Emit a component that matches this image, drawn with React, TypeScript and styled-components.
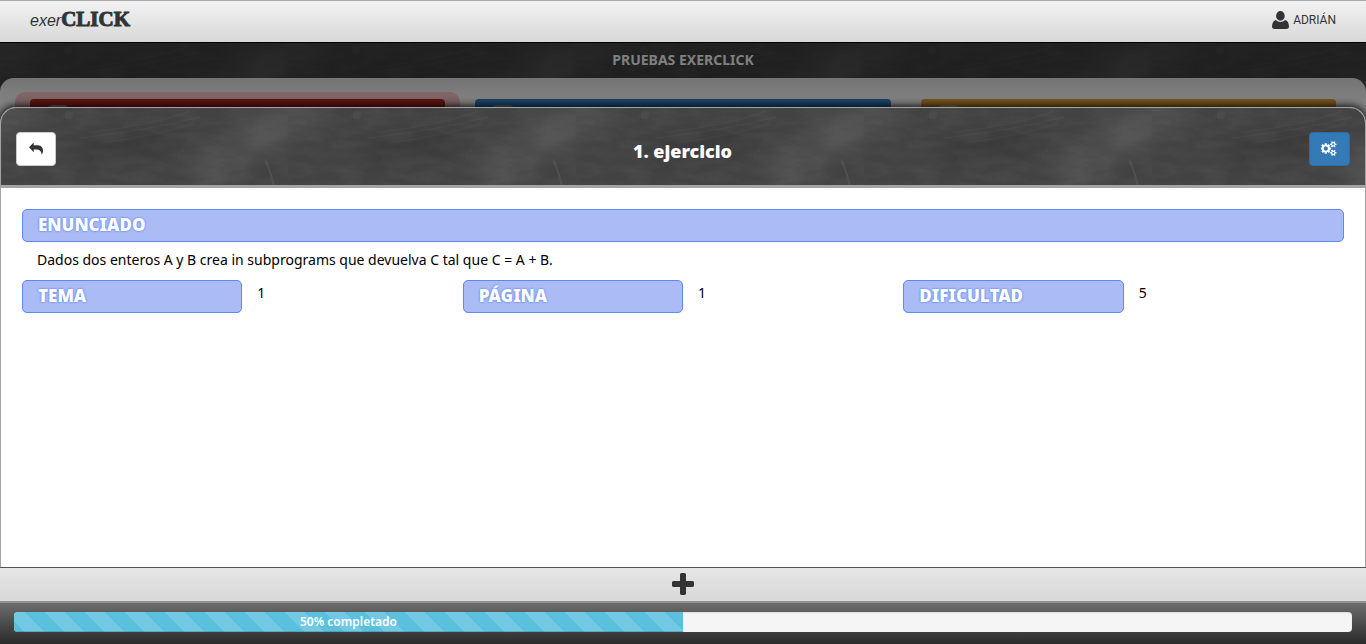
import React from 'react';
import styled, { createGlobalStyle } from 'styled-components';

const GlobalStyle = createGlobalStyle`
  *, *::before, *::after { box-sizing: border-box; }
  body {
    margin: 0;
    background: #202020;
    color: #000;
    font: 14px/20px 'Noto Sans', 'Open Sans', sans-serif;
  }
  button { font: inherit; cursor: pointer; }
`;

const Page = styled.div`
  display: flex;
  flex-direction: column;
  min-height: 100vh;
`;

const TopBar = styled.header`
  display: flex;
  justify-content: space-between;
  align-items: center;
  height: 43px;
  padding: 0 30px 4px;
  border-top: 1px solid #a9a9a9;
  border-bottom: 1px solid #000;
  background: linear-gradient(#f2f2f2, #d8d8d8);
  color: #333;
`;

const Logo = styled.a`
  color: #333;
  text-decoration: none;
  font: bold 21px/24px 'Liberation Serif', serif;
  -webkit-text-stroke: 1px #333;
`;

const LogoScript = styled.span`
  font: italic 16px/24px 'Liberation Sans', sans-serif;
  -webkit-text-stroke: 0;
`;

const UserLink = styled.a`
  display: flex;
  align-items: center;
  gap: 4px;
  color: #333;
  text-decoration: none;
  font: 12px/20px Roboto, 'Liberation Sans', sans-serif;
`;

const Stage = styled.main`
  display: grid;
  flex: 1;
`;

const Board = styled.section`
  grid-area: 1 / 1;
  position: relative;
  display: flex;
  flex-direction: column;
`;

const BoardTitle = styled.h1`
  position: relative;
  margin: 0;
  padding: 7px 0 8px;
  color: #808080;
  font-size: 14px;
  line-height: 20px;
  text-align: center;
`;

const BoardPanel = styled.div`
  position: relative;
  flex: 1;
  display: grid;
  grid-template-columns: repeat(3, 1fr);
  align-items: start;
  padding: 14px 15px 0;
  border-radius: 14px 14px 0 0;
  background: linear-gradient(#747474, #828282 24px);
`;

const Card = styled.div<{ $selected?: boolean }>`
  padding: 7px 15px 0;
  border-radius: 10px;
  background: ${p => (p.$selected ? '#806466' : 'transparent')};
`;

const CardHead = styled.div<{ $color: string }>`
  height: 40px;
  padding: 6px 16px;
  border-radius: 4px 4px 0 0;
  background: ${p => p.$color};
`;

const CardBadge = styled.div<{ $color: string }>`
  width: 24px;
  height: 20px;
  border-radius: 6px;
  background: ${p => p.$color};
`;

const Dialog = styled.section`
  grid-area: 1 / 1;
  z-index: 1;
  display: flex;
  flex-direction: column;
  margin-top: 64px;
  border: 1px solid #a3a3a3;
  border-bottom: 0;
  border-radius: 16px 16px 0 0;
  background: #fff;
  box-shadow: 0 0 8px 1px #000;
`;

const DialogHead = styled.header`
  position: relative;
  display: flex;
  justify-content: space-between;
  align-items: center;
  height: 80px;
  padding: 4px 15px 0;
  border-bottom: 3px solid #a3a3a3;
  border-radius: 15px 15px 0 0;
  background: #424242;
  overflow: hidden;
`;

const DialogTitle = styled.h2`
  position: relative;
  margin: 0;
  padding-top: 4px;
  color: #fff;
  font-size: 18px;
  font-weight: 900;
  line-height: 24px;
`;

const IconButton = styled.button<{ $primary?: boolean }>`
  position: relative;
  display: flex;
  align-items: center;
  justify-content: center;
  width: ${p => (p.$primary ? 41 : 40)}px;
  height: 34px;
  padding: 0;
  border: 1px solid ${p => (p.$primary ? '#2e6da4' : '#ccc')};
  border-radius: 4px;
  background: ${p => (p.$primary ? '#337ab7' : '#fff')};
  color: ${p => (p.$primary ? '#fff' : '#333')};
`;

const DialogBody = styled.div`
  flex: 1;
  padding: 21px;
`;

const Label = styled.h3`
  margin: 0;
  padding: 4px 15px 5px;
  border: 1px solid #5f87f5;
  border-radius: 5px;
  background: #aabbf6;
  color: #fff;
  font-size: 17px;
  font-weight: 900;
  line-height: 22px;
  text-shadow: 0 0 2px #5f87f5, 0 0 2px #5f87f5;
`;

const Statement = styled.p`
  margin: 0;
  padding: 8px 15px 10px;
`;

const Fields = styled.div`
  display: grid;
  grid-template-columns: repeat(6, 1fr);
`;

const Value = styled.p`
  margin: 0;
  padding: 3px 15px;
`;

const AddBar = styled.div`
  position: relative;
  z-index: 2;
  display: flex;
  height: 34px;
  border-top: 1px solid #555;
  background: linear-gradient(#e6e6e6, #d8d8d8);
`;

const AddButton = styled.button`
  flex: 1;
  display: flex;
  justify-content: center;
  align-items: center;
  padding: 0 0 2px;
  border: 0;
  background: none;
  color: #333;
`;

const Footer = styled.footer`
  height: 43px;
  padding: 9px 14px;
  border-top: 2px solid #929292;
  background: linear-gradient(#6c6c6c, #2b2b2b);
`;

const Track = styled.div`
  height: 20px;
  border-radius: 4px;
  background: #f5f5f5;
  box-shadow: inset 0 1px 2px rgba(0, 0, 0, 0.1);
  overflow: hidden;
`;

const Fill = styled.div`
  height: 20px;
  background-color: #5bc0de;
  background-image: linear-gradient(
    45deg,
    rgba(255, 255, 255, 0.15) 25%,
    transparent 25%,
    transparent 50%,
    rgba(255, 255, 255, 0.15) 50%,
    rgba(255, 255, 255, 0.15) 75%,
    transparent 75%,
    transparent
  );
  background-size: 40px 40px;
  background-position: 31px 0;
  box-shadow: inset 0 -1px 0 rgba(0, 0, 0, 0.15);
  color: #fff;
  font-size: 12px;
  font-weight: 600;
  line-height: 20px;
  text-align: center;
`;

const TextureSvg = styled.svg`
  position: absolute;
  inset: 0;
  width: 100%;
  height: 100%;
`;

/* Chalkboard texture, repeated every 288px. */
function Chalkboard({ id, strength }: { id: string; strength: number }) {
  return (
    <TextureSvg aria-hidden="true" opacity={strength}>
      <defs>
        <filter id={`${id}-soft`} x="-50%" y="-50%" width="200%" height="200%">
          <feGaussianBlur stdDeviation="10" />
        </filter>
        <filter id={`${id}-grain`} x="0" y="0" width="100%" height="100%">
          <feTurbulence type="fractalNoise" baseFrequency="0.04 0.12" numOctaves="4" seed="4" />
          <feColorMatrix values="0 0 0 0 1  0 0 0 0 1  0 0 0 0 1  0.5 0 0 0 -0.16" />
        </filter>
        <pattern id={`${id}-tile`} width="288" height="78" x="-1" patternUnits="userSpaceOnUse">
          <g filter={`url(#${id}-soft)`}>
            <path d="M-30 -5 L50 -8 L15 30 L-35 38Z" fill="#fff" opacity=".06" />
            <path d="M258 -5 L338 -8 L303 30 L253 38Z" fill="#fff" opacity=".06" />
            <path d="M195 44 L262 10 L284 28 L222 82 L190 90Z" fill="#fff" opacity=".06" />
            <path d="M62 36 L180 20 L170 44 L75 50Z" fill="#000" opacity=".16" />
            <path d="M195 34 L282 40 L275 52 L205 48Z" fill="#000" opacity=".06" />
          </g>
          <path d="M266 53 Q270 62 274 78" fill="none" stroke="#fff" strokeWidth="2" opacity=".06" />
          <path d="M90 24 Q150 18 190 3 M80 30 Q150 22 200 9 M100 35 Q155 28 195 15" fill="none" stroke="#fff" opacity=".03" />
          <circle cx="69" cy="7" r="4" fill="#fff" opacity=".04" />
          <rect width="288" height="78" filter={`url(#${id}-grain)`} opacity=".14" />
        </pattern>
      </defs>
      <rect width="100%" height="100%" fill={`url(#${id}-tile)`} />
    </TextureSvg>
  );
}

type IconProps = { path: string; box: string; width: number; height: number };

function Icon({ path, box, width, height }: IconProps) {
  return (
    <svg width={width} height={height} viewBox={box} fill="currentColor" aria-hidden="true">
      <path d={path} />
    </svg>
  );
}

const userPath =
  'M8.4 0a4.3 4.9 0 0 1 0 9.8a4.3 4.9 0 0 1 0-9.8ZM2.6 18C.9 18 0 17 0 15.2C.2 11.6 1.4 9.6 3.9 8.9Q5.7 10.9 8.5 10.9T13.1 8.9C15.6 9.6 16.8 11.6 17 15.2C17 17 16.1 18 14.4 18Z';
const plusPath =
  'M1600 736v192q0 40-28 68t-68 28h-416v416q0 40-28 68t-68 28h-192q-40 0-68-28t-28-68v-416h-416q-40 0-68-28t-28-68v-192q0-40 28-68t68-28h416v-416q0-40 28-68t68-28h192q40 0 68 28t28 68v416h416q40 0 68 28t28 68z';
const replyPath =
  'M0 5.3L4.7 .4V3.2H8.2C12 3.2 14 5.3 14 8.8C14 10.4 13.5 11.6 12.6 12.8C12.5 9.2 11 7.5 8.2 7.4H4.7V10.3Z';
const cogsPath =
  'M832 896q0-106-75-181t-181-75-181 75-75 181 75 181 181 75 181-75 75-181zm768 512q0-52-38-90t-90-38-90 38-38 90q0 53 37.5 90.5t90.5 37.5 90.5-37.5 37.5-90.5zm0-1024q0-52-38-90t-90-38-90 38-38 90q0 53 37.5 90.5t90.5 37.5 90.5-37.5 37.5-90.5zm-384 421v185q0 10-7 19.5t-16 10.5l-155 24q-11 35-32 76 34 48 90 115 7 11 7 20 0 12-7 19-23 30-82.5 89.5t-78.5 59.5q-11 0-21-7l-115-90q-37 19-77 31-11 108-23 155-7 24-30 24h-186q-11 0-20-7.5t-10-17.5l-23-153q-34-10-75-31l-118 89q-7 7-20 7-11 0-21-8-144-133-144-160 0-9 7-19 10-14 41-53t47-61q-23-44-35-82l-152-24q-10-1-17-9.5t-7-19.5v-185q0-10 7-19.5t16-10.5l155-24q11-35 32-76-34-48-90-115-7-11-7-20 0-12 7-20 22-30 82-89t79-59q11 0 21 7l115 90q34-18 77-32 11-108 23-154 7-24 30-24h186q11 0 20 7.5t10 17.5l23 153q34 10 75 31l118-89q8-7 20-7 11 0 21 8 144 133 144 160 0 8-7 19-12 16-42 54t-45 60q23 48 34 82l152 23q10 2 17 10.5t7 19.5zm640 533v140q0 16-149 31-12 27-30 52 51 113 51 138 0 4-4 7-122 71-124 71-8 0-46-47t-52-68q-20 2-30 2t-30-2q-14 21-52 68t-46 47q-2 0-124-71-4-3-4-7 0-25 51-138-18-25-30-52-149-15-149-31v-140q0-16 149-31 13-29 30-52-51-113-51-138 0-4 4-7 4-2 35-20t59-34 30-16q8 0 46 46.5t52 67.5q20-2 30-2t30 2q51-71 92-112l6-2q4 0 124 70 4 3 4 7 0 25-51 138 17 23 30 52 149 15 149 31zm0-1024v140q0 16-149 31-12 27-30 52 51 113 51 138 0 4-4 7-122 71-124 71-8 0-46-47t-52-68q-20 2-30 2t-30-2q-14 21-52 68t-46 47q-2 0-124-71-4-3-4-7 0-25 51-138-18-25-30-52-149-15-149-31v-140q0-16 149-31 13-29 30-52-51-113-51-138 0-4 4-7 4-2 35-20t59-34 30-16q8 0 46 46.5t52 67.5q20-2 30-2t30 2q51-71 92-112l6-2q4 0 124 70 4 3 4 7 0 25-51 138 17 23 30 52 149 15 149 31z';

const cards = [
  { color: '#5e1512', badge: '#6b5a5a', selected: true },
  { color: '#1b4468', badge: '#4c6478', selected: false },
  { color: '#7a5420', badge: '#86704e', selected: false },
];

const fields = [
  { label: 'TEMA', value: '1' },
  { label: 'PÁGINA', value: '1' },
  { label: 'DIFICULTAD', value: '5' },
];

export default function App() {
  const progress = 50;
  return (
    <Page>
      <GlobalStyle />
      <TopBar>
        <Logo href="#">
          <LogoScript>exer</LogoScript>CLICK
        </Logo>
        <UserLink href="#">
          <Icon path={userPath} box="0 0 17 18" width={17} height={18} />
          ADRIÁN
        </UserLink>
      </TopBar>
      <Stage>
        <Board>
          <Chalkboard id="board" strength={0.4} />
          <BoardTitle>PRUEBAS EXERCLICK</BoardTitle>
          <BoardPanel>
            {cards.map(card => (
              <Card key={card.color} $selected={card.selected}>
                <CardHead $color={card.color}>
                  <CardBadge $color={card.badge} />
                </CardHead>
              </Card>
            ))}
          </BoardPanel>
        </Board>
        <Dialog>
          <DialogHead>
            <Chalkboard id="head" strength={1} />
            <IconButton aria-label="Volver">
              <Icon path={replyPath} box="0 0 14 14" width={14} height={14} />
            </IconButton>
            <DialogTitle>1. ejercicio</DialogTitle>
            <IconButton $primary aria-label="Opciones">
              <Icon path={cogsPath} box="0 0 1920 1792" width={16} height={15} />
            </IconButton>
          </DialogHead>
          <DialogBody>
            <Label>ENUNCIADO</Label>
            <Statement>Dados dos enteros A y B crea in subprograms que devuelva C tal que C = A + B.</Statement>
            <Fields>
              {fields.map(field => (
                <React.Fragment key={field.label}>
                  <Label>{field.label}</Label>
                  <Value>{field.value}</Value>
                </React.Fragment>
              ))}
            </Fields>
          </DialogBody>
        </Dialog>
      </Stage>
      <AddBar>
        <AddButton aria-label="Añadir">
          <Icon path={plusPath} box="192 128 1408 1408" width={22} height={22} />
        </AddButton>
      </AddBar>
      <Footer>
        <Track role="progressbar" aria-label="Progreso" aria-valuenow={progress} aria-valuemin={0} aria-valuemax={100}>
          <Fill style={{ width: `${progress}%` }}>{progress}% completado</Fill>
        </Track>
      </Footer>
    </Page>
  );
}
